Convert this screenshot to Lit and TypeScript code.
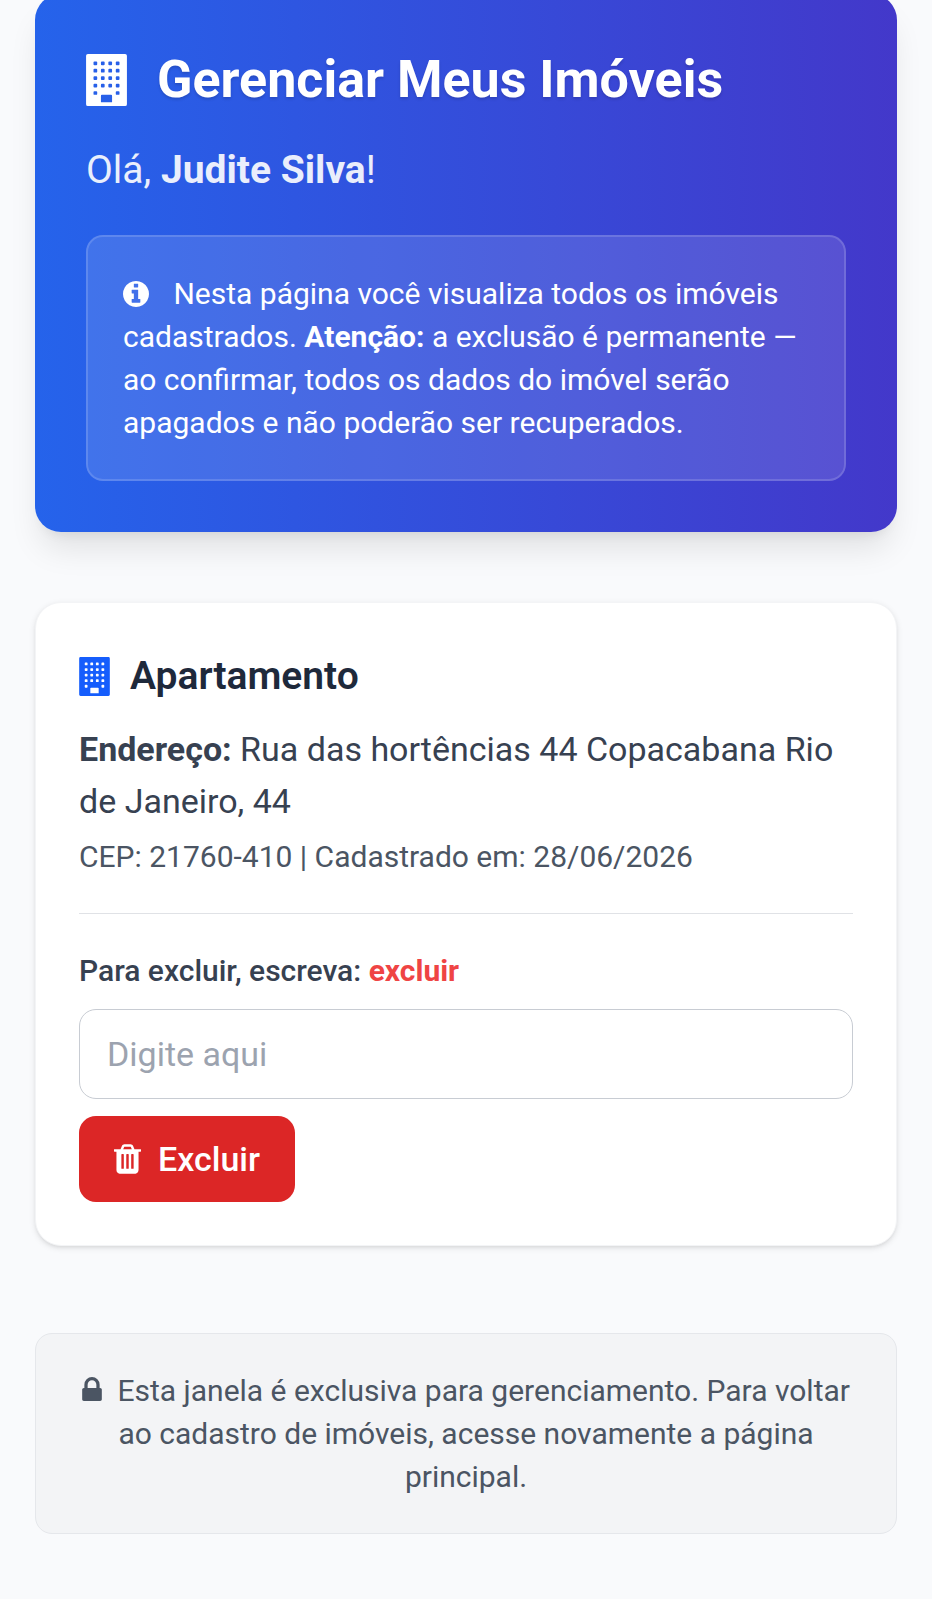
import { LitElement, html, css, svg } from 'lit';
import { customElement, property, state } from 'lit/decorators.js';

export interface Property {
  type: string;
  address: string;
  cep: string;
  createdAt: string;
}

const WINDOW_ROWS = [256, 512, 768, 1024, 1280];
const WINDOW_COLS = [256, 512, 768, 1024];

// Walls, then the windows and the door cut out of them (the door replaces two windows)
const buildingPath = [
  'M64 0H1344Q1408 0 1408 64V1728Q1408 1792 1344 1792H64Q0 1792 0 1728V64Q0 0 64 0Z',
  ...WINDOW_ROWS.flatMap(y =>
    WINDOW_COLS.filter(x => y < 1280 || x === 256 || x === 1024).map(
      x => `M${x + 32} ${y}h64q32 0 32 32v64q0 32-32 32h-64q-32 0-32-32v-64q0-32 32-32Z`
    )
  ),
  'M544 1408H864Q896 1408 896 1440V1664H512V1440Q512 1408 544 1408Z',
].join('');

const buildingIcon = svg`<path fill-rule="evenodd" d=${buildingPath} />`;

const infoIcon = svg`<path d="M1024 1376v-160q0-14-9-23t-23-9h-96v-512q0-14-9-23t-23-9h-320q-14 0-23 9t-9 23v160q0 14 9 23t23 9h96v320h-96q-14 0-23 9t-9 23v160q0 14 9 23t23 9h448q14 0 23-9t9-23zm-128-896v-160q0-14-9-23t-23-9h-192q-14 0-23 9t-9 23v160q0 14 9 23t23 9h192q14 0 23-9t9-23zm640 416q0 209-103 385.5t-279.5 279.5-385.5 103-385.5-103-279.5-279.5-103-385.5 103-385.5 279.5-279.5 385.5-103 385.5 103 279.5 279.5 103 385.5z" />`;

const trashIcon = svg`<path d="M512 1376v-704q0-14-9-23t-23-9h-64q-14 0-23 9t-9 23v704q0 14 9 23t23 9h64q14 0 23-9t9-23zm256 0v-704q0-14-9-23t-23-9h-64q-14 0-23 9t-9 23v704q0 14 9 23t23 9h64q14 0 23-9t9-23zm256 0v-704q0-14-9-23t-23-9h-64q-14 0-23 9t-9 23v704q0 14 9 23t23 9h64q14 0 23-9t9-23zm-544-992h448l-48-117q-7-9-17-11h-317q-10 2-17 11zm928 32v64q0 14-9 23t-23 9h-96v948q0 83-47 143.5t-113 60.5h-832q-66 0-113-58.5t-47-141.5v-952h-96q-14 0-23-9t-9-23v-64q0-14 9-23t23-9h309l70-167q15-37 54-63t79-26h320q40 0 79 26t54 63l70 167h309q14 0 23 9t9 23z" />`;

const lockIcon = svg`<path d="M320 768h512v-192q0-106-75-181t-181-75-181 75-75 181v192zm832 96v576q0 40-28 68t-68 28h-960q-40 0-68-28t-28-68v-576q0-40 28-68t68-28h32v-192q0-184 132-316t316-132 316 132 132 316v192h32q40 0 68 28t28 68z" />`;

@customElement('property-card')
export class PropertyCard extends LitElement {
  static styles = css`
    :host {
      display: block;
    }
    .card {
      padding: 43px;
      background-color: #fff;
      border: 1px solid #f3f4f6;
      border-radius: 26px;
      box-shadow: 0 2px 6px rgba(0, 0, 0, 0.1), 0 2px 4px -2px rgba(0, 0, 0, 0.1);
    }
    .title {
      display: flex;
      align-items: center;
      gap: 20px;
      margin: 0 0 17px;
      font-size: 39px;
      line-height: 60px;
      font-weight: 600;
      color: #1e293b;
    }
    .title-icon {
      width: 31px;
      height: 39px;
      fill: #155dfc;
    }
    .address {
      margin: 0;
      font-size: 34px;
      line-height: 52px;
      color: #374151;
    }
    .details {
      margin: 8px 0 35px;
      font-size: 30px;
      line-height: 43px;
      color: #4b5563;
    }
    .form {
      display: flex;
      flex-direction: column;
      align-items: flex-start;
      gap: 17px;
      padding-top: 35px;
      border-top: 1px solid #e0e2e6;
    }
    .label {
      font-size: 30px;
      line-height: 43px;
      font-weight: 500;
      color: #374151;
    }
    .keyword {
      font-weight: 700;
      color: #ef4444;
    }
    .input {
      box-sizing: border-box;
      width: 100%;
      height: 90px;
      padding: 17px 27px;
      font: inherit;
      font-size: 34px;
      color: #1f2937;
      background-color: #fff;
      border: 1px solid #c8ccd3;
      border-radius: 17px;
    }
    .input::placeholder {
      color: #9ca3af;
      opacity: 1;
    }
    .delete {
      display: flex;
      align-items: center;
      gap: 17px;
      padding: 17px 35px;
      font: inherit;
      font-size: 34px;
      line-height: 52px;
      font-weight: 500;
      color: #fff;
      background-color: #dc2626;
      border: none;
      border-radius: 17px;
      cursor: pointer;
    }
    .delete:hover {
      background-color: #b91c1c;
    }
    .delete-icon {
      width: 27px;
      height: 30px;
      fill: currentColor;
    }
  `;

  @property({ type: Object })
  item!: Property;

  @state()
  private _confirmation = '';

  private _handleInput(e: Event) {
    this._confirmation = (e.target as HTMLInputElement).value;
  }

  private _handleSubmit(e: Event) {
    e.preventDefault();
    if (this._confirmation.trim().toLowerCase() === 'excluir') {
      this.dispatchEvent(new CustomEvent('property-deleted', { detail: this.item, bubbles: true, composed: true }));
    }
  }

  render() {
    return html`
      <article class="card">
        <h2 class="title">
          <svg class="title-icon" viewBox="0 0 1408 1792" aria-hidden="true">${buildingIcon}</svg>
          ${this.item.type}
        </h2>
        <p class="address"><strong>Endereço:</strong> ${this.item.address}</p>
        <p class="details">CEP: ${this.item.cep} | Cadastrado em: ${this.item.createdAt}</p>
        <form class="form" @submit=${this._handleSubmit}>
          <label class="label" for="confirmation">Para excluir, escreva: <span class="keyword">excluir</span></label>
          <input
            class="input"
            id="confirmation"
            type="text"
            placeholder="Digite aqui"
            autocomplete="off"
            .value=${this._confirmation}
            @input=${this._handleInput}
          />
          <button class="delete" type="submit">
            <svg class="delete-icon" viewBox="0 128 1408 1536" aria-hidden="true">${trashIcon}</svg>
            Excluir
          </button>
        </form>
      </article>
    `;
  }
}

@customElement('app-root')
export class AppRoot extends LitElement {
  static styles = css`
    :host {
      display: block;
      box-sizing: border-box;
      min-height: 100vh;
      padding: 0 35px 63px;
      overflow: hidden;
      font-family: Roboto, 'Liberation Sans', sans-serif;
      background-color: #f9fafc;
    }
    .banner {
      margin: -6px 0 70px;
      padding: 51px;
      color: #fff;
      background: linear-gradient(to right, #2563eb, #4338ca);
      border-radius: 26px;
      box-shadow: 0 22px 32px -6px rgba(0, 0, 0, 0.1), 0 9px 13px -9px rgba(0, 0, 0, 0.1);
    }
    .heading {
      display: flex;
      align-items: center;
      gap: 30px;
      margin: 0 0 26px;
      font-size: 52px;
      line-height: 69px;
      font-weight: 700;
      text-shadow: 0 2px 3px rgba(0, 0, 0, 0.15);
    }
    .heading-icon {
      width: 41px;
      height: 52px;
      fill: currentColor;
    }
    .greeting {
      margin: 0 0 35px;
      font-size: 39px;
      line-height: 60px;
      opacity: 0.9;
    }
    .greeting-name {
      font-weight: 700;
    }
    .notice {
      margin: 0;
      padding: 35px;
      font-size: 30px;
      line-height: 43px;
      background-color: rgba(255, 255, 255, 0.12);
      border: 2px solid rgba(255, 255, 255, 0.15);
      border-radius: 17px;
    }
    .notice-icon {
      width: 26px;
      height: 26px;
      margin-right: 17px;
      vertical-align: -3px;
      fill: currentColor;
    }
    .list {
      display: grid;
      gap: 52px;
    }
    .footer {
      margin: 87px 0 0;
      padding: 35px;
      font-size: 30px;
      line-height: 43px;
      text-align: center;
      color: #4b5563;
      background-color: #f3f4f6;
      border: 1px solid #e5e7eb;
      border-radius: 17px;
    }
    .footer-icon {
      width: 20px;
      height: 24px;
      margin-right: 8px;
      fill: currentColor;
    }
  `;

  @property({ type: String })
  userName: string = 'Judite Silva';

  @state()
  private _items: Property[] = [
    {
      type: 'Apartamento',
      address: 'Rua das hortências 44 Copacabana Rio de Janeiro, 44',
      cep: '21760-410',
      createdAt: '28/06/2026',
    },
  ];

  private _handleDeleted(e: CustomEvent<Property>) {
    this._items = this._items.filter(item => item !== e.detail);
  }

  render() {
    return html`
      <header class="banner">
        <h1 class="heading">
          <svg class="heading-icon" viewBox="0 0 1408 1792" aria-hidden="true">${buildingIcon}</svg>
          Gerenciar Meus Imóveis
        </h1>
        <p class="greeting">Olá, <strong class="greeting-name">${this.userName}</strong>!</p>
        <p class="notice">
          <svg class="notice-icon" viewBox="0 128 1536 1536" aria-hidden="true">${infoIcon}</svg>
          Nesta página você visualiza todos os imóveis cadastrados.
          <strong>Atenção:</strong> a exclusão é permanente — ao confirmar, todos os dados do imóvel serão apagados e
          não poderão ser recuperados.
        </p>
      </header>
      <main class="list" @property-deleted=${this._handleDeleted}>
        ${this._items.map(item => html`<property-card .item=${item}></property-card>`)}
      </main>
      <footer class="footer">
        <svg class="footer-icon" viewBox="0 128 1152 1408" aria-hidden="true">${lockIcon}</svg>
        Esta janela é exclusiva para gerenciamento. Para voltar ao cadastro de imóveis, acesse novamente a página
        principal.
      </footer>
    `;
  }
}

declare global {
  interface HTMLElementTagNameMap {
    'property-card': PropertyCard;
    'app-root': AppRoot;
  }
}
